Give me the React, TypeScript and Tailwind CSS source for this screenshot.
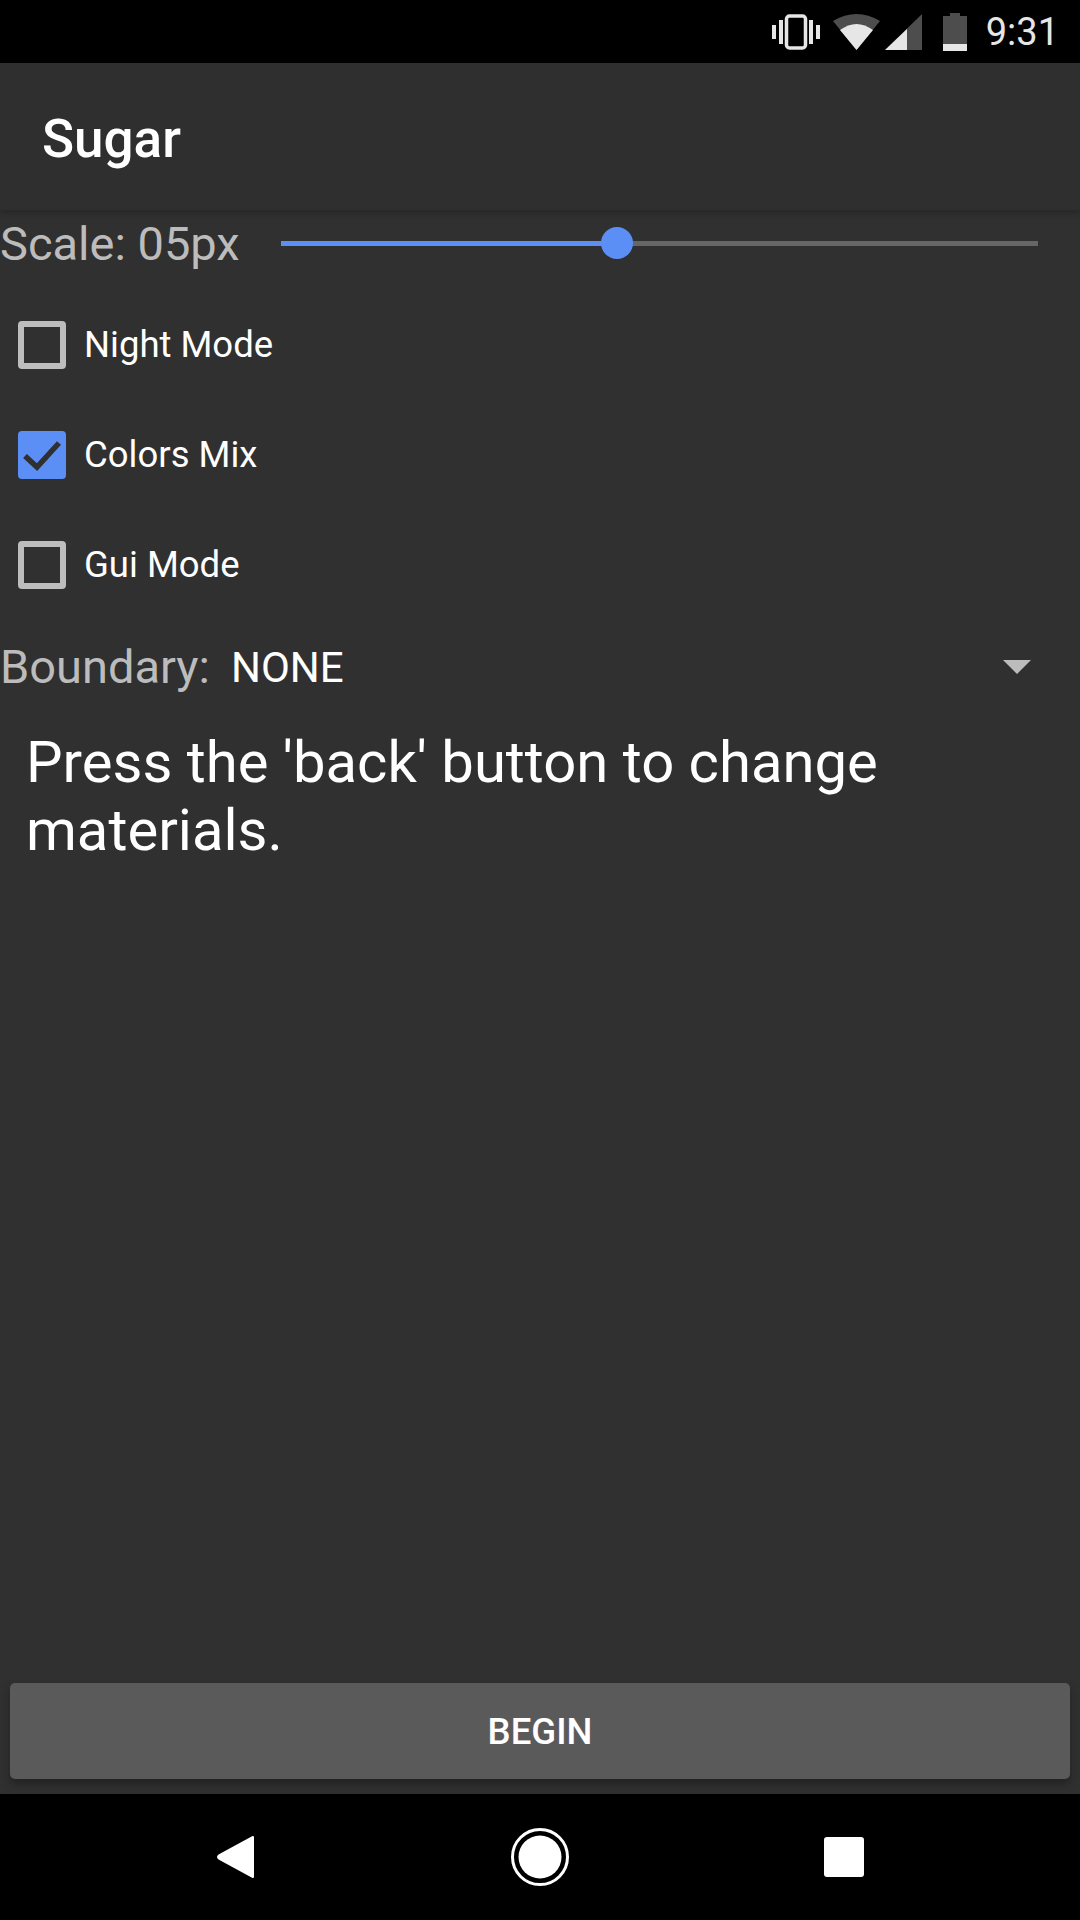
const font = { fontFamily: "Roboto, sans-serif" };

function StatusIcons() {
  return (
    <div className="flex items-center">
      {/* vibrate */}
      <svg width="48" height="36" viewBox="0 0 48 36" className="mr-[13px]" fill="none">
        <rect x="0" y="11" width="4" height="14" fill="#e6e6e6" />
        <rect x="7" y="6" width="4" height="24" fill="#e6e6e6" />
        <rect x="37" y="6" width="4" height="24" fill="#e6e6e6" />
        <rect x="44" y="11" width="4" height="14" fill="#e6e6e6" />
        <rect x="14.5" y="2" width="19" height="32" rx="3" stroke="#e6e6e6" strokeWidth="3.5" />
      </svg>
      {/* wifi */}
      <svg width="47" height="36" viewBox="0 0 47 36" className="mr-[5px]">
        <path d="M0 7Q23.5-7 47 7L23.5 36Z" fill="#4d4d4d" />
        <path d="M7 16Q23.5 4 40 16L23.5 36Z" fill="#e6e6e6" />
      </svg>
      {/* signal */}
      <svg width="37" height="36" viewBox="0 0 37 36" className="mr-[21px]">
        <path d="M37 0V36H0Z" fill="#4d4d4d" />
        <path d="M22 15V36H0Z" fill="#e6e6e6" />
      </svg>
      {/* battery */}
      <svg width="24" height="38" viewBox="0 0 24 38" className="mr-[19px]">
        <path d="M7 0H17V3H24V38H0V3H7Z" fill="#4d4d4d" />
        <rect x="0" y="31" width="24" height="7" fill="#e6e6e6" />
      </svg>
      <span className="text-[38px] leading-none text-[#e6e6e6]">9:31</span>
    </div>
  );
}

function CheckRow({ label, checked }: { label: string; checked?: boolean }) {
  return (
    <div className="flex h-[110px] items-center pl-[18px]">
      {checked ? (
        <div className="h-[48px] w-[48px] rounded-[4px] bg-[#5c8ff5]">
          <svg width="48" height="48" viewBox="0 0 48 48" fill="none">
            <path d="M7 25 19 36 41 12" stroke="#303030" strokeWidth="5.5" />
          </svg>
        </div>
      ) : (
        <div className="h-[48px] w-[48px] rounded-[4px] border-[6px] border-[#bdbdbd]" />
      )}
      <span className="ml-[18px] text-[36.5px] text-white">{label}</span>
    </div>
  );
}

export default function App() {
  return (
    <div className="flex h-[1920px] w-[1080px] flex-col overflow-hidden bg-[#303030]" style={font}>
      <div className="flex h-[63px] shrink-0 items-center justify-end bg-black pr-[21px]">
        <StatusIcons />
      </div>

      <header className="flex h-[147px] shrink-0 items-center bg-[#2f2f2f] pl-[42px] pt-[6px] shadow-[0_3px_6px_rgba(0,0,0,0.2)]">
        <h1 className="text-[53px] font-medium text-white">Sugar</h1>
      </header>

      <div className="flex h-[66px] items-center">
        <span className="w-[281px] shrink-0 pt-[2px] text-[47px] text-[#bcbcbc]">Scale: 05px</span>
        <div className="relative h-[5px] w-[757px] bg-[#666666]">
          <div className="h-full w-[336px] bg-[#5c8ff5]" />
          <div className="absolute left-[320px] top-[-14px] h-[32px] w-[32px] rounded-full bg-[#5c8ff5]" />
        </div>
      </div>

      <div className="mt-[14px]">
        <CheckRow label="Night Mode" />
        <CheckRow label="Colors Mix" checked />
        <CheckRow label="Gui Mode" />
      </div>

      <div className="mt-[15px] flex h-[64px] items-center">
        <span className="text-[47px] text-[#bcbcbc]">Boundary:</span>
        <span className="ml-[21px] text-[42px] text-white">NONE</span>
        <svg width="28" height="14" viewBox="0 0 28 14" className="ml-auto mr-[49px]">
          <path d="M0 0H28L14 14Z" fill="#bcbcbc" />
        </svg>
      </div>

      <p className="mt-[29px] px-[26px] text-[58px] leading-[68px] text-white">
        Press the 'back' button to change materials.
      </p>

      <div className="mt-auto px-[10px] pb-[15px]">
        <button className="flex h-[96px] w-full items-center justify-center rounded-[5px] bg-[#5a5a5b] pt-[2px] text-[36.5px] font-medium text-white shadow-[0_5px_8px_rgba(0,0,0,0.3)]">
          BEGIN
        </button>
      </div>

      <nav className="relative flex h-[126px] shrink-0 items-center bg-black">
        <svg width="38" height="44" viewBox="0 0 38 44" className="absolute left-[217px] top-[41px]">
          <path d="M36 2V42L2 23.5Q0 22 2 20.5Z" fill="#fff" stroke="#fff" strokeWidth="2" strokeLinejoin="round" />
        </svg>
        <svg width="58" height="58" viewBox="0 0 58 58" className="absolute left-[511px] top-[34px]">
          <circle cx="29" cy="29" r="27.5" fill="none" stroke="#fff" strokeWidth="3" />
          <circle cx="29" cy="29" r="21.5" fill="#fff" />
        </svg>
        <div className="absolute left-[824px] top-[43px] h-[40px] w-[40px] rounded-[3px] bg-white" />
      </nav>
    </div>
  );
}
